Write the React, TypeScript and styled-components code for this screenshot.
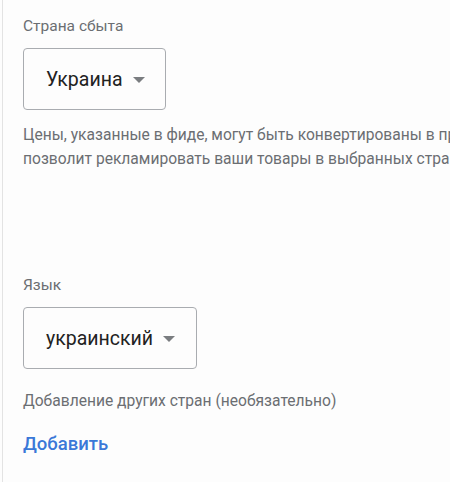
import styled, { createGlobalStyle } from "styled-components";

const GlobalStyle = createGlobalStyle`
    body {
        margin: 0;
        background: #fdfdfd;
        font-family: Roboto, "Noto Sans", Arial, sans-serif;
        overflow: hidden;
    }
`

const Card = styled.div`
    margin-left: 2px;
    min-height: 482px;
    border-left: 1px solid #e3e3e3;
    background: #fdfdfd;
    padding: 16px 0 0 20px;
    box-sizing: border-box;
`

const Label = styled.div`
    font-size: 15.5px;
    line-height: 20px;
    color: #6b6e72;
`

const Select = styled.div<{ $width: number }>`
    margin-top: 12px;
    width: ${p => p.$width}px;
    height: 62px;
    box-sizing: border-box;
    border: 1px solid #a9acb0;
    border-radius: 4px;
    display: flex;
    align-items: center;
    gap: 10px;
    padding-left: 22px;
    font-size: 19.5px;
    color: #222;
`

const Caret = styled.span`
    width: 0;
    height: 0;
    border-left: 6px solid transparent;
    border-right: 6px solid transparent;
    border-top: 6px solid #7a7d80;
    margin-top: 2px;
`

const Hint = styled.p<{ $top: number }>`
    margin: ${p => p.$top}px 0 0;
    font-size: 15.6px;
    line-height: 24px;
    color: #6b6e72;
    white-space: nowrap;
`

const Section = styled.div`
    margin-top: 104px;
`

const AddLink = styled.a`
    display: inline-block;
    margin-top: 20px;
    font-size: 18.5px;
    font-weight: 500;
    color: #3a78d8;
    text-decoration: none;
`

const App = () => {
    return (
        <>
            <GlobalStyle />
            <Card>
                <Label>Страна сбыта</Label>
                <Select $width={143}>Украина <Caret /></Select>
                <Hint $top={13}>
                    Цены, указанные в фиде, могут быть конвертированы в предпочитаемую валюту, что<br />
                    позволит рекламировать ваши товары в выбранных странах.
                </Hint>
                <Section>
                    <Label>Язык</Label>
                    <Select $width={174}>украинский <Caret /></Select>
                </Section>
                <Hint $top={20}>Добавление других стран (необязательно)</Hint>
                <AddLink href="#">Добавить</AddLink>
            </Card>
        </>
    )
}

export default App;
